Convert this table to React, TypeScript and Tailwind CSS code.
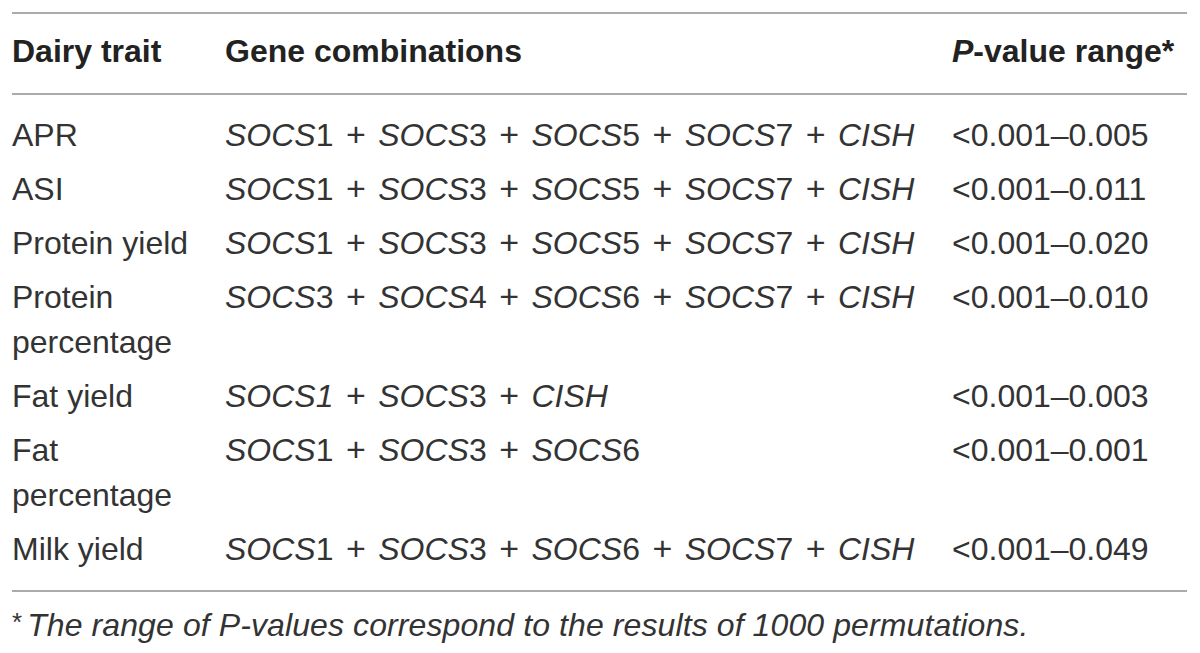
import React from 'react';

type Row = {
    trait: string;
    genes: React.ReactNode;
    p: string;
};

// one gene name: italic symbol, upright number unless told otherwise
const Gene = ({ name, num, allItalic }: { name: string; num?: string; allItalic?: boolean }) =>
    allItalic ? (
        <i>{name}{num}</i>
    ) : (
        <>
            <i>{name}</i>
            {num}
        </>
    );

const Plus = () => <span className="mx-[3px] text-[34px] leading-none"> + </span>;

const rows: Row[] = [
    {
        trait: 'APR',
        genes: (<><Gene name="SOCS" num="1" /><Plus /><Gene name="SOCS" num="3" /><Plus /><Gene name="SOCS" num="5" /><Plus /><Gene name="SOCS" num="7" /><Plus /><Gene name="CISH" /></>),
        p: '<0.001–0.005',
    },
    {
        trait: 'ASI',
        genes: (<><Gene name="SOCS" num="1" /><Plus /><Gene name="SOCS" num="3" /><Plus /><Gene name="SOCS" num="5" /><Plus /><Gene name="SOCS" num="7" /><Plus /><Gene name="CISH" /></>),
        p: '<0.001–0.011',
    },
    {
        trait: 'Protein yield',
        genes: (<><Gene name="SOCS" num="1" /><Plus /><Gene name="SOCS" num="3" /><Plus /><Gene name="SOCS" num="5" /><Plus /><Gene name="SOCS" num="7" /><Plus /><Gene name="CISH" /></>),
        p: '<0.001–0.020',
    },
    {
        trait: 'Protein percentage',
        genes: (<><Gene name="SOCS" num="3" /><Plus /><Gene name="SOCS" num="4" /><Plus /><Gene name="SOCS" num="6" /><Plus /><Gene name="SOCS" num="7" /><Plus /><Gene name="CISH" /></>),
        p: '<0.001–0.010',
    },
    {
        trait: 'Fat yield',
        genes: (<><Gene name="SOCS" num="1" allItalic /><Plus /><Gene name="SOCS" num="3" /><Plus /><Gene name="CISH" /></>),
        p: '<0.001–0.003',
    },
    {
        trait: 'Fat percentage',
        genes: (<><Gene name="SOCS" num="1" /><Plus /><Gene name="SOCS" num="3" /><Plus /><Gene name="SOCS" num="6" /></>),
        p: '<0.001–0.001',
    },
    {
        trait: 'Milk yield',
        genes: (<><Gene name="SOCS" num="1" /><Plus /><Gene name="SOCS" num="3" /><Plus /><Gene name="SOCS" num="6" /><Plus /><Gene name="SOCS" num="7" /><Plus /><Gene name="CISH" /></>),
        p: '<0.001–0.049',
    },
];

export default function App() {
    return (
        <div className="w-[1200px] h-[653px] bg-white overflow-hidden font-['Liberation_Sans',Arial,sans-serif] text-[32px] leading-[45px] text-[#333]">
            <div className="ml-[12px] mr-[13px] pt-[12px]">
                <div className="h-[2px] bg-[#ababab]" />

                {/* header */}
                <div className="grid grid-cols-[213px_727px_1fr] pt-[15px] pb-[19px] font-bold text-[#222]">
                    <div>Dairy trait</div>
                    <div>Gene combinations</div>
                    <div className="whitespace-nowrap">
                        <i>P</i>-value range*
                    </div>
                </div>

                <div className="h-[2px] bg-[#ababab]" />

                {/* body */}
                <div className="pt-[13px] pb-[14px]">
                    {rows.map((r) => (
                        <div key={r.trait} className="grid grid-cols-[213px_727px_1fr] py-[4.5px]">
                            <div className="pr-[10px]">{r.trait}</div>
                            <div className="whitespace-nowrap">{r.genes}</div>
                            <div className="whitespace-nowrap">{r.p}</div>
                        </div>
                    ))}
                </div>

                <div className="h-[2px] bg-[#ababab]" />

                {/* footnote */}
                <div className="pt-[8px] whitespace-nowrap">
                    <span className="text-[26px] align-[5px]">*</span>
                    <i className="ml-[5px] tracking-[0.1px]">The range of P-values correspond to the results of 1000 permutations.</i>
                </div>
            </div>
        </div>
    );
}
